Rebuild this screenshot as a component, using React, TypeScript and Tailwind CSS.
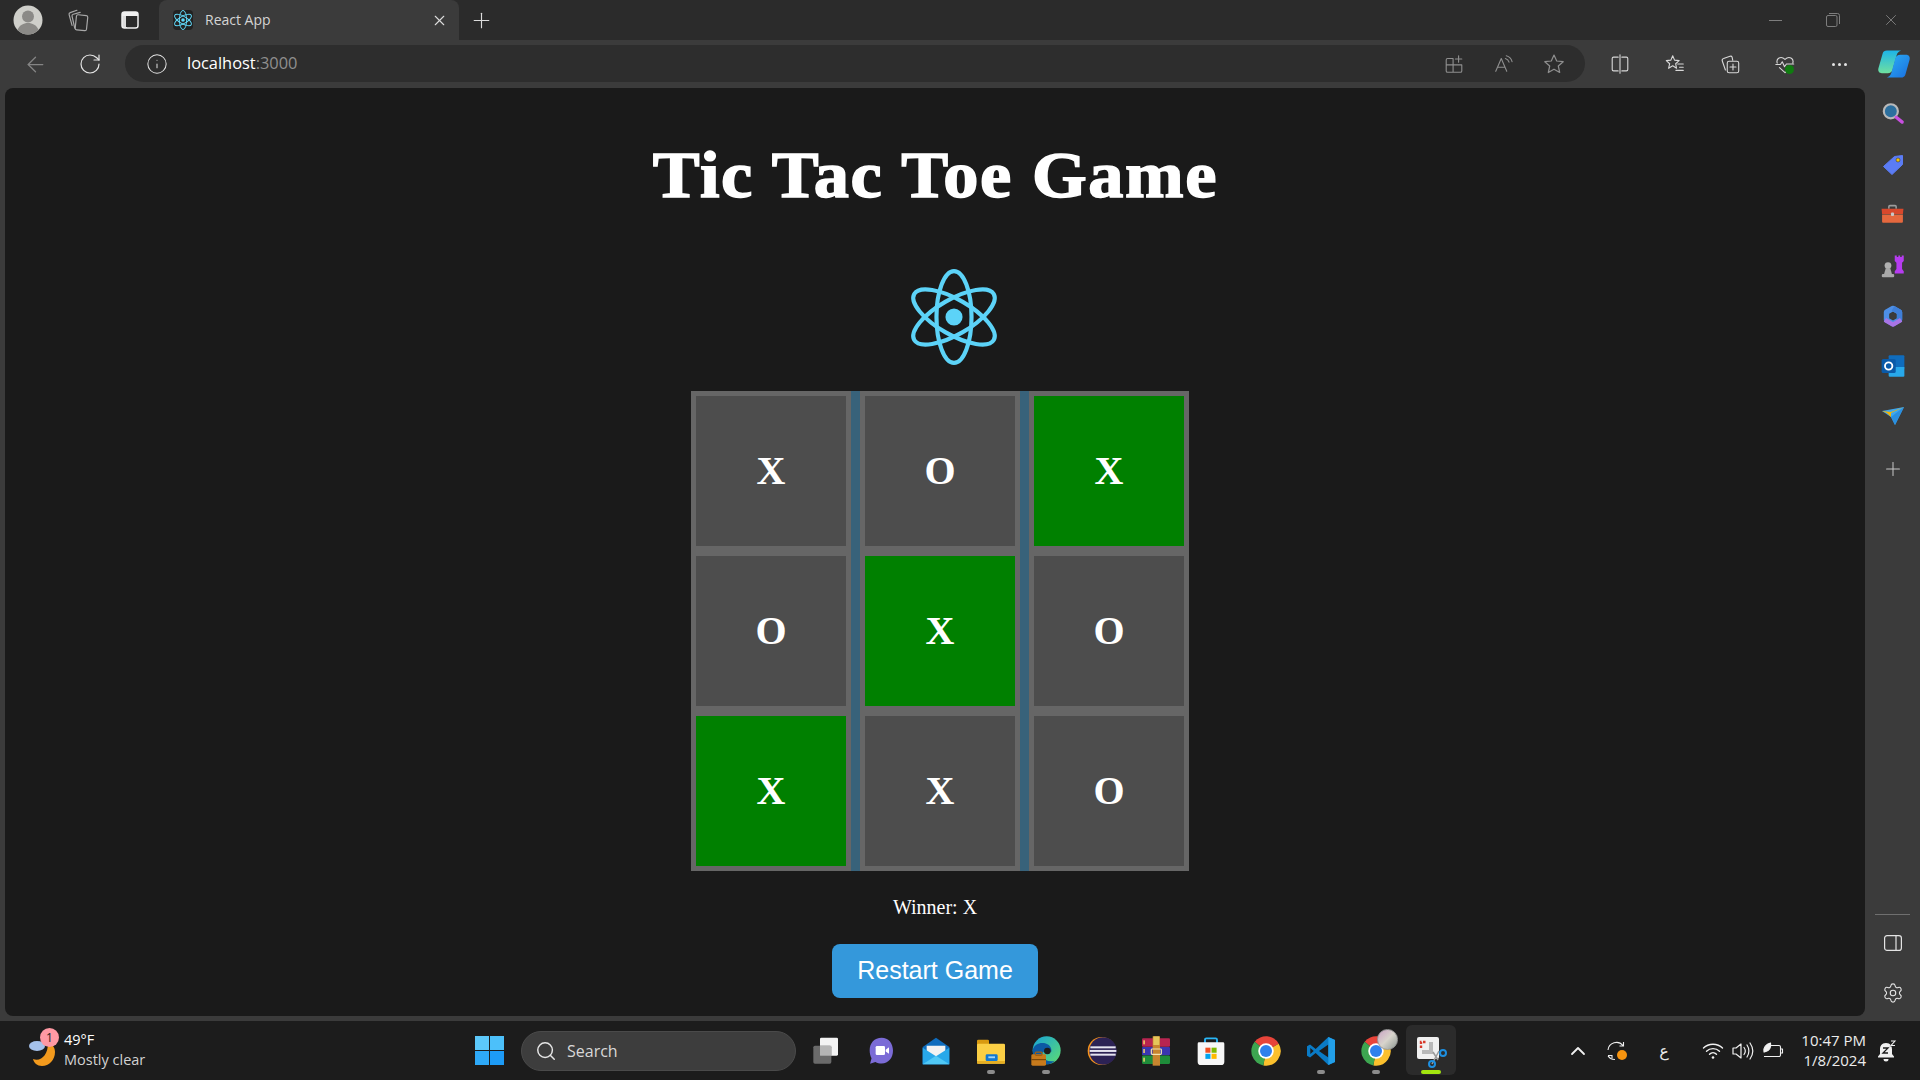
import React from "react";
import { ArrowLeft, RotateCw, Info, X, Plus, Search, ChevronUp, Settings } from "lucide-react";

const font = "font-['Open_Sans','Noto_Sans',sans-serif]";

type P = { s?: number; children: React.ReactNode; c?: string; w?: number };
function Ln({ s = 22, children, c = "#d8d8d8", w = 1.2 }: P) {
  return (
    <svg width={s} height={s} viewBox="0 0 24 24" fill="none" stroke={c} strokeWidth={w} strokeLinecap="round" strokeLinejoin="round">
      {children}
    </svg>
  );
}
function Col({ s = 30, children }: { s?: number; children: React.ReactNode }) {
  return (
    <svg width={s} height={s} viewBox="0 0 24 24" fill="none">
      {children}
    </svg>
  );
}

function ReactLogo({ size, color, sw = 1 }: { size: number; color: string; sw?: number }) {
  return (
    <svg width={size} height={size} viewBox="-11.5 -11.5 23 23" fill="none">
      <circle r="2.05" fill={color} />
      <g stroke={color} strokeWidth={sw}>
        <ellipse rx="11" ry="4.2" transform="rotate(90)" />
        <ellipse rx="11" ry="4.2" transform="rotate(30)" />
        <ellipse rx="11" ry="4.2" transform="rotate(150)" />
      </g>
    </svg>
  );
}

function Chrome({ s = 30 }: { s?: number }) {
  return (
    <Col s={s}>
      <path d="M12 12L3.500 5A11 11 0 0 1 21.530 6.500Z" fill="#e8443a" />
      <path d="M12 12L21.530 6.500A11 11 0 0 1 10 22.800Z" fill="#fbc02d" />
      <path d="M12 12L10 22.800A11 11 0 0 1 3.500 5Z" fill="#3da650" />
      <circle cx="12" cy="12" r="5.800" fill="#fff" />
      <circle cx="12" cy="12" r="4.500" fill="#2f80ed" />
    </Col>
  );
}

const TaskIcons = [
  { k: "task", d: false, n: (
    <Col s={32}>
      <rect x="7.500" y="2" width="13.500" height="13.500" rx="1" fill="#f3f3f3" />
      <rect x="2.500" y="8" width="13.500" height="13.500" rx="1.200" fill="#6f6f6f" fillOpacity="0.95" />
      <rect x="7.500" y="8" width="8.500" height="7.500" fill="#b5b5b5" />
    </Col>
  ) },
  { k: "chat", d: false, n: (
    <Col s={32}>
      <path d="M12.500 2C7 2 3.500 6 3.500 11.500c0 2.300.5 4.300 1.400 6L3.800 21.500l4-1.300c1.400.8 3 1.200 4.700 1.200 5 0 8.500-4 8.500-9.700S17.500 2 12.500 2Z" fill="#7b6bd6" />
      <rect x="8" y="8.200" width="7" height="6.800" rx="1" fill="#fff" />
      <path d="M15.500 11l2.500-1.800v4.800L15.500 12.400Z" fill="#fff" />
    </Col>
  ) },
  { k: "mail", d: false, n: (
    <Col s={32}>
      <path d="M12 2L22 9v13H2V9Z" fill="#0f6cbd" />
      <path d="M5 8h14v6l-7 4-7-4Z" fill="#f2f2f2" />
      <path d="M2 9.500l10 6.500 10-6.500V22H2Z" fill="#28a8ea" />
      <path d="M2 22l10-6.500L22 22Z" fill="#50c8f5" />
    </Col>
  ) },
  { k: "files", d: true, n: (
    <Col s={32}>
      <rect x="1.500" y="3.500" width="9" height="5" rx="1" fill="#d99a10" />
      <rect x="1.500" y="6.500" width="21" height="15" rx="1" fill="#fbcf45" />
      <rect x="1.500" y="19.500" width="21" height="2" fill="#e6ae22" />
      <rect x="8" y="14.500" width="9" height="5" rx="1" fill="#0f78d4" />
      <rect x="10" y="16" width="5" height="1.400" fill="#9fd4f7" />
    </Col>
  ) },
  { k: "edge", d: true, n: (
    <Col s={32}>
      <defs>
        <linearGradient id="edgeA" x1="0" y1="0" x2="1" y2="1">
          <stop offset="0" stopColor="#17a3d8" />
          <stop offset="1" stopColor="#5fdd6f" />
        </linearGradient>
      </defs>
      <circle cx="12.500" cy="11.500" r="10.500" fill="url(#edgeA)" />
      <path d="M2 11.500C3 7 7 5.500 10.500 6c4 .6 6 3.500 5.500 6.500H11c-2 0-2.500 2-1.500 4 1.200 2.300 5 4 9 2.800C16.500 21.300 14.500 22 12.500 22 6.700 22 2 17.300 2 11.500Z" fill="#0c59a4" />
      <circle cx="13" cy="12" r="2.500" fill="#1c1c1c" />
      <rect x="1" y="14.500" width="11" height="8.500" rx="1" fill="#c77a1c" />
      <rect x="4" y="12.800" width="5" height="2.500" rx="0.800" fill="none" stroke="#a3600f" />
      <rect x="1" y="18" width="11" height="0.900" fill="#7a4708" />
    </Col>
  ) },
  { k: "eclipse", d: false, n: (
    <Col s={32}>
      <circle cx="12.500" cy="12" r="10.500" fill="#f7941e" />
      <circle cx="13.500" cy="12" r="10.300" fill="#2c2255" />
      <rect x="4" y="8.500" width="19" height="1.500" fill="#e6e4f0" />
      <rect x="3.500" y="11.200" width="20" height="1.500" fill="#e6e4f0" />
      <rect x="4" y="14" width="19" height="1.500" fill="#e6e4f0" />
    </Col>
  ) },
  { k: "rar", d: false, n: (
    <Col s={32}>
      <rect x="1.500" y="2.500" width="21" height="6.400" rx="0.800" fill="#b82450" />
      <rect x="1.500" y="9" width="21" height="6.200" rx="0.800" fill="#3a36b0" />
      <rect x="1.500" y="15.300" width="21" height="6.400" rx="0.800" fill="#1e8c3a" />
      <rect x="2.500" y="4" width="1.100" height="3" fill="#f5d66b" />
      <rect x="2.500" y="10.500" width="1.100" height="3" fill="#f5d66b" />
      <rect x="2.500" y="17" width="1.100" height="3" fill="#f5d66b" />
      <rect x="9.500" y="1" width="5.500" height="22" fill="#c7852f" />
      <rect x="10" y="1" width="4.500" height="6.500" fill="#e5c65b" />
      <rect x="8.500" y="10.500" width="7.500" height="4" rx="0.600" fill="none" stroke="#f1e3b0" strokeWidth="0.900" />
    </Col>
  ) },
  { k: "store", d: false, n: (
    <Col s={32}>
      <path d="M7.500 6V3.500a1 1 0 0 1 1-1h7a1 1 0 0 1 1 1V6" stroke="#29b6f6" strokeWidth="1.400" />
      <path d="M3 5.500h18a1 1 0 0 1 1 1V20a2.500 2.500 0 0 1-2.500 2.500h-15A2.500 2.500 0 0 1 2 20V6.500a1 1 0 0 1 1-1Z" fill="#f7f7f7" />
      <rect x="7.800" y="9.500" width="3.800" height="3.800" fill="#f25022" />
      <rect x="12.400" y="9.500" width="3.800" height="3.800" fill="#7fba00" />
      <rect x="7.800" y="14.100" width="3.800" height="3.800" fill="#00a4ef" />
      <rect x="12.400" y="14.100" width="3.800" height="3.800" fill="#ffb900" />
    </Col>
  ) },
  { k: "chrome", d: false, n: <Chrome s={32} /> },
  { k: "vscode", d: true, n: (
    <Col s={32}>
      <path d="M17.500 1.500L8 10.500 3.800 7.200 1.500 8.400v7.200l2.300 1.200L8 13.500l9.500 9 5-2.200V3.700Z" fill="#0a7bc6" />
      <path d="M17.500 7.200L10.500 12l7 4.800Z" fill="#1c1c1c" />
      <path d="M17.500 1.500l5 2.200v16.600l-5 2.200Z" fill="#229fe8" />
      <path d="M4 9.800L6.500 12 4 14.200Z" fill="#1c1c1c" />
    </Col>
  ) },
  { k: "chrome2", d: true, n: (
    <div className="relative">
      <Chrome s={32} />
      <div className="absolute top-[-6px] left-[17px] w-[21px] h-[21px] rounded-full bg-gradient-to-br from-[#c9a3c4] via-[#d8d4cc] to-[#8f9a94] border border-[#9a9a9a]" />
    </div>
  ) },
];

function Board() {
  const cells = ["X", "O", "X", "O", "X", "O", "X", "X", "O"];
  const win = [2, 4, 6];
  return (
    <div className="mt-[26px] ml-[10px] grid grid-cols-[repeat(3,160px)] gap-x-[9px] bg-[#38627a]">
      {cells.map((c, i) => (
        <div
          key={i}
          className={`w-[160px] h-[160px] border-[5px] border-[#666666] flex items-center justify-center text-[40px] font-bold text-white ${
            win.includes(i) ? "bg-[#008000]" : "bg-[#4d4d4d]"
          }`}
        >
          {c}
        </div>
      ))}
    </div>
  );
}

export default function App() {
  return (
    <div className={`w-[1920px] h-[1080px] flex flex-col bg-[#3b3b3b] overflow-hidden ${font}`}>
      {/* title bar */}
      <div className="h-[40px] shrink-0 flex items-center bg-[#2b2b2b]">
        <div className="w-[56px] flex justify-center">
          <svg width="30" height="30" viewBox="0 0 30 30">
            <circle cx="15" cy="15" r="14.500" fill="#cfcfca" />
            <circle cx="15" cy="11.500" r="6" fill="#8b8a87" />
            <path d="M4.500 25c2-5 6-7 10.500-7s8.500 2 10.500 7a14.500 14.500 0 0 1-21 0Z" fill="#8b8a87" />
          </svg>
        </div>
        <div className="w-[44px] flex justify-center">
          <Ln s={26} c="#a8a8a8" w={1.100}>
            <rect x="10" y="7.500" width="10.500" height="14" rx="1.500" transform="rotate(6 15 14)" />
            <path d="M9 19.500L6.500 8.500a1.500 1.500 0 0 1 1.100-1.800L14 5" />
            <path d="M6.500 17L3.800 7a1.500 1.500 0 0 1 1-1.800L11 3" />
          </Ln>
        </div>
        <div className="w-[59px] flex justify-center">
          <svg width="18" height="18" viewBox="0 0 18 18" fill="none">
            <rect x="1" y="1" width="16" height="16" rx="2.500" stroke="#f0f0f0" strokeWidth="1.500" />
            <path d="M1 2.500a1.500 1.500 0 0 1 1.500-1.500h13a1.500 1.500 0 0 1 1.500 1.500V5H1Z" fill="#f0f0f0" />
            <rect x="1" y="4" width="5" height="13" fill="#f0f0f0" fillOpacity="0.9" />
            <rect x="5" y="5" width="11" height="11" fill="#2b2b2b" />
          </svg>
        </div>
        <div className="w-[300px] h-full rounded-t-lg bg-[#3b3b3b] flex items-center pl-[14px] pr-[11px]">
          <div className="w-[20px] h-[20px] rounded-sm bg-[#222222] flex items-center justify-center">
            <ReactLogo size={20} color="#61dafb" sw={1.100} />
          </div>
          <span className="ml-[12px] mb-[2px] text-[14px] text-[#d4d4d4]">React App</span>
          <X className="ml-auto" size={17} color="#dcdcdc" strokeWidth={1.500} />
        </div>
        <div className="w-[42px] ml-[1px] flex justify-center">
          <Plus size={25} color="#dcdcdc" strokeWidth={1.100} />
        </div>
        <div className="flex-1" />
        <div className="w-[58px] flex justify-center">
          <div className="w-[13px] h-px bg-[#7e7e7e]" />
        </div>
        <div className="w-[58px] flex justify-center">
          <svg width="14" height="14" viewBox="0 0 14 14" fill="none" stroke="#7e7e7e">
            <rect x="0.500" y="2.500" width="10.500" height="11" rx="1.500" />
            <path d="M3 .5h8.500A2 2 0 0 1 13.500 2.500V11" />
          </svg>
        </div>
        <div className="w-[58px] flex justify-center">
          <X size={18} color="#8a8a8a" strokeWidth={1.100} />
        </div>
      </div>

      {/* toolbar */}
      <div className="h-[48px] shrink-0 flex items-center">
        <div className="w-[70px] flex justify-center">
          <ArrowLeft size={25} color="#858585" strokeWidth={1.200} />
        </div>
        <div className="w-[40px] flex justify-center">
          <RotateCw size={24} color="#e4e4e4" strokeWidth={1.200} />
        </div>
        <div className="ml-[15px] w-[1460px] h-[37px] mb-px rounded-full bg-[#2d2d2d] flex items-center">
          <div className="ml-[21px] w-[22px] flex justify-center">
            <Info size={22} color="#e4e4e4" strokeWidth={1.100} />
          </div>
          <span className="ml-[19px] mb-[1px] text-[16.400px] text-white">
            localhost<span className="text-[#8f8f8f]">:3000</span>
          </span>
          <div className="flex-1" />
          <div className="w-[50px] flex justify-center">
            <Ln c="#8f8f8f">
              <path d="M11 6H5a1.500 1.500 0 0 0-1.500 1.500v12A1.500 1.500 0 0 0 5 21h14a1.500 1.500 0 0 0 1.500-1.500V13H3.500M11 6v15" />
              <path d="M17 3v7M13.500 6.500h7" />
            </Ln>
          </div>
          <div className="w-[50px] flex justify-center">
            <Ln c="#8f8f8f">
              <path d="M3 20L9 6l6 14M5 15.500h8" />
              <path d="M13.500 6c2 .5 3.500 2 4 4M14.500 3c3 .8 5.500 3.200 6.300 6.500" />
            </Ln>
          </div>
          <div className="w-[50px] flex justify-center">
            <Ln c="#8f8f8f" s={24}>
              <path d="M12 3l2.700 6 6.500.7-4.900 4.300 1.400 6.500L12 17.200 6.300 20.500 7.700 14 2.800 9.700 9.300 9Z" />
            </Ln>
          </div>
          <div className="w-[6px]" />
        </div>
        <div className="ml-[7px] w-[55px] flex justify-center">
          <Ln>
            <path d="M10 4.500H5A1.500 1.500 0 0 0 3.500 6v12A1.500 1.500 0 0 0 5 19.500h5M14 4.500h5A1.500 1.500 0 0 1 20.500 6v12a1.500 1.500 0 0 1-1.500 1.500h-5M12 2v20" />
          </Ln>
        </div>
        <div className="w-[55px] flex justify-center">
          <Ln>
            <path d="M9.500 3l2 4.800 5 .5-3.800 3.400 1 5L9.500 14 5 16.700l1.200-5L2.500 8.300l5-.5Z" />
            <path d="M15 12h6M17 15.500h4M13 19h8" />
          </Ln>
        </div>
        <div className="w-[55px] flex justify-center">
          <Ln>
            <path d="M7 18.500L3.500 8.500A2 2 0 0 1 5 6l7-2.500c1-.3 2 .2 2.300 1L15 8" />
            <rect x="9" y="9" width="12.500" height="12.500" rx="2" />
            <path d="M15.250 12v6.500M12 15.250h6.500" />
          </Ln>
        </div>
        <div className="w-[55px] flex justify-center relative">
          <Ln>
            <path d="M3.500 11C2 6 7.500 2.500 12 7c4.500-4.500 10-1 8.500 4" />
            <path d="M2 12.500h5l2-3 2.500 5.500 2-3h8M6 16l6 5.500 1-1" />
          </Ln>
          <div className="absolute left-[28px] top-[12px] w-[9px] h-[9px] rounded-full bg-[#107c10]" />
        </div>
        <div className="w-[55px] flex justify-center items-center gap-[3px]">
          <div className="w-[3px] h-[3px] rounded-full bg-[#e4e4e4]" />
          <div className="w-[3px] h-[3px] rounded-full bg-[#e4e4e4]" />
          <div className="w-[3px] h-[3px] rounded-full bg-[#e4e4e4]" />
        </div>
        <div className="flex-1 flex justify-center">
          <Col s={34}>
            <defs>
              <linearGradient id="copA" x1="0" y1="0" x2="0" y2="1">
                <stop offset="0" stopColor="#1db4e8" />
                <stop offset="1" stopColor="#6fe0a0" />
              </linearGradient>
              <linearGradient id="copB" x1="0" y1="0" x2="1" y2="1">
                <stop offset="0" stopColor="#2cb0f5" />
                <stop offset="1" stopColor="#1a6fe0" />
              </linearGradient>
            </defs>
            <path d="M7 2.500h10c-1.500.5-2.700 1.500-3.200 3.500L11 16c-.5 1.500-1.500 2.500-3.500 2.500H3.500C1.500 18.500.5 17 1 15L4 4.500C4.400 3.200 5.500 2.500 7 2.500Z" fill="url(#copA)" />
            <path d="M17 21.500H7c1.500-.5 2.700-1.500 3.200-3.500L13 8c.5-1.500 1.500-2.500 3.500-2.500h4c2 0 3 1.500 2.500 3.500l-3 10.500c-.4 1.300-1.500 2-3 2Z" fill="url(#copB)" />
          </Col>
        </div>
      </div>

      {/* body */}
      <div className="flex-1 flex min-h-0 pl-[5px]">
        <main className="w-[1860px] mb-[5px] rounded-lg bg-[#1a1a1a] flex flex-col items-center font-['Liberation_Serif',serif] text-white">
          <h1 className="mt-[52px] h-[70px] text-[66px] leading-[70px] font-bold tracking-[1.500px] scale-x-[1.065] [-webkit-text-stroke:1.500px_white]">
            Tic Tac Toe Game
          </h1>
          <div className="mt-[59px] ml-[38px] h-[96px]">
            <ReactLogo size={96} color="#5cd3f8" />
          </div>
          <Board />
          <p className="mt-[24px] h-[24px] text-[20px] leading-[24px]">Winner: X</p>
          <button className="mt-[25px] w-[206px] h-[54px] rounded-lg bg-[#3498db] text-white text-[25px] font-['Liberation_Sans',sans-serif]">
            Restart Game
          </button>
        </main>

        <aside className="flex-1 flex flex-col items-center pt-px pb-[3px]">
          {[
            <Col s={26} key="s">
              <circle cx="10" cy="9.500" r="6.500" fill="#2c6f9e" stroke="#b9b9b9" strokeWidth="2" />
              <path d="M15 15l5.500 4.500" stroke="#c84fe0" strokeWidth="3" strokeLinecap="round" />
            </Col>,
            <Col s={24} key="t">
              <path d="M2.500 13.500L13.500 3.500 21.500 2.500v9L11 21.500Z" fill="#5b7cf5" stroke="#5b7cf5" strokeLinejoin="round" />
              <circle cx="17" cy="7" r="2" fill="#f2c200" stroke="#3a3a3a" strokeWidth="0.600" />
            </Col>,
            <Col s={25} key="b">
              <path d="M8.500 6.500V4.500a1 1 0 0 1 1-1h5a1 1 0 0 1 1 1v2" stroke="#9c9c9c" strokeWidth="1.500" />
              <path d="M1.500 6.500h21l-.5 5h-20Z" fill="#d8482c" />
              <path d="M2 12h20v7a1 1 0 0 1-1 1H3a1 1 0 0 1-1-1Z" fill="#e5683e" />
              <rect x="10.500" y="10" width="3" height="3.500" rx="1" fill="#c8c8c8" />
            </Col>,
            <Col s={27} key="c">
              <circle cx="8" cy="12" r="3" fill="#b0b0b0" />
              <path d="M6 14.500h4l1.500 5H4.500Z" fill="#a8a8a8" />
              <rect x="2.500" y="19.500" width="11" height="3" rx="1" fill="#a8a8a8" />
              <path d="M14 3h1.800v1.500h1.400V3h1.600v1.500h1.400V3H22v5l-1.500 1.500V15l1.500 2v2H14v-2l1.500-2V9.500L14 8Z" fill="#b63cf0" />
            </Col>,
            <Col s={26} key="m">
              <path d="M12 5L18 8.500v7L12 19l-6-3.500v-7Z" stroke="#4d8fe6" strokeWidth="5" strokeLinejoin="round" />
              <path d="M12 5L18 8.500v7" stroke="#3f7fd8" strokeWidth="5" strokeLinejoin="round" />
              <path d="M4.500 15.500L12 20l7.500-4.500" stroke="#a874e6" strokeWidth="4" strokeLinejoin="round" />
              <path d="M12 8.500l3 1.800v3.400L12 15.500l-3-1.800v-3.400Z" fill="#3b3b3b" />
            </Col>,
            <Col s={26} key="o">
              <rect x="8" y="2" width="14.500" height="13" rx="1" fill="#0f6cbd" />
              <path d="M8 13h14.500v8a1 1 0 0 1-1 1H9a1 1 0 0 1-1-1Z" fill="#28a8ea" />
              <rect x="1.500" y="5.500" width="13" height="13" rx="1.500" fill="#0a5aa8" />
              <circle cx="8" cy="12" r="3.400" fill="none" stroke="#fff" strokeWidth="1.700" />
            </Col>,
            <div className="mb-[4px]" key="p">
              <Col s={24}>
                <path d="M1 8L23 4 14 22l-4-8Z" fill="#3ea7ee" />
                <path d="M1 8l9 1 13-5L10 10v4L6 10Z" fill="#f6b400" />
                <path d="M10 14L23 4l-9 18Z" fill="#2a8fe0" />
              </Col>
            </div>,
            <div className="mt-[4px]" key="a">
              <Plus size={22} color="#c8c8c8" strokeWidth={1.100} />
            </div>,
          ].map((n, i) => (
            <div key={i} className="h-[50.400px] shrink-0 flex items-center justify-center">
              {n}
            </div>
          ))}
          <div className="mt-auto w-[35px] h-px bg-[#6f6f6f]" />
          <div className="h-[50px] mt-[3px] flex items-center justify-center">
            <svg width="18" height="16" viewBox="0 0 18 16" fill="none" stroke="#e4e4e4" strokeWidth="1.200">
              <rect x="0.600" y="0.600" width="16.800" height="14.800" rx="2.500" />
              <path d="M12 1v14" />
            </svg>
          </div>
          <div className="h-[50px] flex items-center justify-center">
            <Settings size={22} color="#e4e4e4" strokeWidth={1.200} />
          </div>
        </aside>
      </div>

      {/* taskbar */}
      <div className="h-[59px] shrink-0 bg-[#1c1c1c] flex items-center text-white">
        <div className="w-[64px] h-full flex items-center justify-center relative pl-[18px]">
          <svg width="32" height="36" viewBox="0 0 32 36" className="mt-[2px] ml-[5px]">
            <path d="M20 9c5 1 7 5 7 9 0 8-6 14-13 14-5 0-8-3-9-7 8 3 15-4 15-16Z" fill="#f39a1d" />
            <ellipse cx="9" cy="12" rx="8" ry="5" fill="#a5c2ec" />
          </svg>
          <div className="absolute left-[40px] top-[7px] w-[19px] h-[19px] rounded-full bg-[#ff99a4] text-[#222] text-[12px] flex items-center justify-center">
            1
          </div>
        </div>
        <div className="w-[411px] flex flex-col text-[14.500px] leading-[20px] mb-[2px]">
          <span>49°F</span>
          <span className="text-[#d2d2d2]">Mostly clear</span>
        </div>
        <div className="w-[46px] flex">
          <div className="w-[29px] h-[29px] grid grid-cols-2 gap-[1.500px]">
            <div className="bg-[#5cc8fa]" />
            <div className="bg-[#4cc0fa]" />
            <div className="bg-[#2ea9f8]" />
            <div className="bg-[#1d9bf6]" />
          </div>
        </div>
        <div className="w-[275px] h-[40px] rounded-full bg-[#3d3d3d] border border-[#4a4a4a] flex items-center pl-[13px] text-[16px] text-[#d8d8d8]">
          <Search size={22} color="#e6e6e6" strokeWidth={1.600} />
          <span className="ml-[10px]">Search</span>
        </div>
        <div className="ml-[2px] flex">
          {TaskIcons.map((t) => (
            <div key={t.k} className="relative w-[55px] h-[59px] flex items-center justify-center">
              {t.n}
              {t.d && <div className="absolute bottom-[6px] w-[8px] h-[4px] rounded-full bg-[#8c8c8c]" />}
            </div>
          ))}
          <div className="relative ml-[3px] w-[50px] h-[50px] mt-[4px] rounded-md bg-[#2b2b2b] flex items-center justify-center">
            <svg width="34" height="38" viewBox="0 0 34 38" fill="none">
              <rect x="3" y="6" width="22" height="22" rx="2" fill="#f0f0f0" />
              <path d="M7 17v-6h6" stroke="#d83b2d" strokeWidth="2.400" strokeDasharray="2.500 1.500" />
              <path d="M17 11v10H8" stroke="#b8b8b8" strokeWidth="4" />
              <path d="M25 20L18 33M19 21l5 8" stroke="#9a9a9a" strokeWidth="1.500" />
              <circle cx="29" cy="22" r="3" stroke="#1d8fe0" strokeWidth="2" />
              <circle cx="18" cy="33" r="3" stroke="#1d8fe0" strokeWidth="2" />
            </svg>
            <div className="absolute bottom-[1px] w-[20px] h-[4px] rounded-full bg-[#a3e60f]" />
          </div>
        </div>
        <div className="flex-1" />
        <div className="w-[24px] flex justify-center">
          <ChevronUp size={24} color="#f0f0f0" strokeWidth={1.800} />
        </div>
        <div className="ml-[14px] w-[26px] flex justify-center">
          <svg width="24" height="24" viewBox="0 0 24 24" fill="none" stroke="#eee" strokeWidth="1.100">
            <path d="M3 11a8.500 8.500 0 0 1 15-4.500M18.500 3v4h-4M3 17l2.500 2.500c1.500.8 3 1 4.500 1" />
            <path d="M3 16.500h4v3" />
            <circle cx="17" cy="16" r="5" fill="#f7940f" stroke="none" />
          </svg>
        </div>
        <div className="ml-[21px] w-[26px] text-center text-[16px] text-[#e8e8e8] font-['DejaVu_Sans',sans-serif]">ع</div>
        <div className="ml-[25px] w-[22px] flex justify-center">
          <svg width="22" height="18" viewBox="0 0 22 18" fill="none" stroke="#f0f0f0" strokeWidth="1.400" strokeLinecap="round">
            <path d="M1.500 6c5-5 14-5 19 0M4.500 9.200c3.500-3.500 9.500-3.500 13 0M7.500 12.200c2-2 5-2 7 0" />
            <circle cx="11" cy="15.500" r="1.300" fill="#f0f0f0" stroke="none" />
          </svg>
        </div>
        <div className="ml-[8px] w-[22px] flex justify-center">
          <svg width="22" height="20" viewBox="0 0 22 20" fill="none" stroke="#f0f0f0" strokeWidth="1.200" strokeLinecap="round" strokeLinejoin="round">
            <path d="M1 7h3l5-4v14l-5-4H1Z" />
            <path d="M12 6.500c1.500 2 1.500 5 0 7M15 4c2.500 3.500 2.500 8.500 0 12M18 2c3.500 5 3.500 11 0 16" />
          </svg>
        </div>
        <div className="ml-[8px] w-[22px] flex justify-center">
          <svg width="22" height="20" viewBox="0 0 22 20" fill="none" stroke="#f0f0f0" strokeWidth="1.100" strokeLinejoin="round">
            <path d="M8 4.500h9a1.500 1.500 0 0 1 1.500 1.500v8a1.500 1.500 0 0 1-1.500 1.500H2" />
            <path d="M19 8h1.500v4H19" />
            <path d="M2 11c-1-4 2-8 6.500-9 1 4-1 8-6 9Z" fill="#f0f0f0" />
          </svg>
        </div>
        <div className="ml-[13px] w-[69px] mb-[2px] flex flex-col items-end text-[15px] leading-[20px] text-[#ececec] whitespace-nowrap">
          <span>10:47 PM</span>
          <span>1/8/2024</span>
        </div>
        <div className="ml-[8px] mr-[22px] w-[24px] flex justify-center">
          <svg width="24" height="24" viewBox="0 0 24 24" fill="none">
            <path d="M12 4c-4.500 0-6 3-6 6.500V15l-2 2.500v1h16v-1L18 15v-4.500C18 7 16.500 4 12 4Z" fill="#f0f0f0" />
            <path d="M9.500 20a2.500 2.500 0 0 0 5 0Z" fill="#f0f0f0" />
            <path d="M9 9h5l-5 5h5M17 2h4l-4 4.500h4" stroke="#1c1c1c" strokeWidth="1.300" />
            <path d="M17 2h4l-4 4.500h4" stroke="#f0f0f0" strokeWidth="1.100" />
          </svg>
        </div>
      </div>
    </div>
  );
}
